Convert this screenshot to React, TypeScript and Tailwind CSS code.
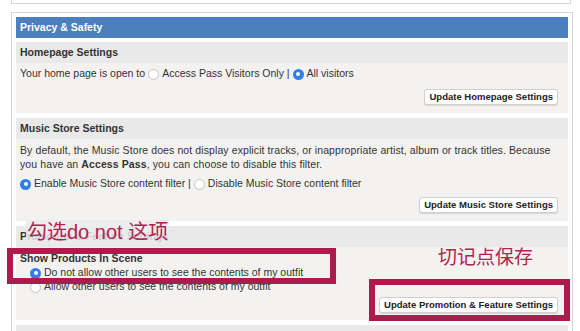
import type { ReactNode } from "react";

function Radio({ checked }: { checked?: boolean }) {
  return checked ? (
    <span className="inline-flex h-[11px] w-[11px] shrink-0 items-center justify-center rounded-full bg-[#2f7fe6]">
      <span className="h-[4px] w-[4px] rounded-full bg-white" />
    </span>
  ) : (
    <span className="inline-block h-[11px] w-[11px] shrink-0 rounded-full border border-[#c4c4c4] bg-white" />
  );
}

function UpdateButton({ children }: { children: ReactNode }) {
  return (
    <div className="flex justify-end pr-[10px]">
      <button className="h-[16px] rounded-[3px] border border-[#cfcfcf] bg-white px-[4px] text-[9.5px] font-bold leading-none text-[#222] shadow-[0_1px_1px_rgba(0,0,0,0.12)]">
        {children}
      </button>
    </div>
  );
}

function Section({
  title,
  children,
  className = "",
}: {
  title: string;
  children?: ReactNode;
  className?: string;
}) {
  return (
    <div className="bg-[#f3f2f0]">
      <div className="flex h-[21px] items-center bg-[#e9e9e9] px-[4px] text-[10.5px] font-bold text-[#333]">
        {title}
      </div>
      <div className={className}>{children}</div>
    </div>
  );
}

export default function App() {
  return (
    <div
      className="relative h-[331px] w-[580px] overflow-hidden bg-white text-[10.5px] text-[#333]"
      style={{ fontFamily: '"Liberation Sans", Arial, "Noto Sans CJK SC", sans-serif' }}
    >
      {/* tail of previous panel */}
      <div className="ml-[11px] h-[4px] w-[560px] border-x border-b border-[#d6d6d6]" />

      <div className="ml-[11px] mt-[8px] w-[562px] border border-[#d6d6d6] p-[4px] pb-0">
        <div className="flex h-[21px] items-center bg-[#4b80bd] px-[4px] text-[10.5px] font-bold text-white">
          Privacy &amp; Safety
        </div>

        <div className="mt-[4px] flex flex-col gap-[5px]">
          <Section title="Homepage Settings" className="h-[50px] pt-[5px]">
            <div className="flex h-[12px] items-center gap-[3px] px-[4px]">
              <span>Your home page is open to</span>
              <Radio />
              <span>Access Pass Visitors Only |</span>
              <Radio checked />
              <span>All visitors</span>
            </div>
            <div className="mt-[9px]">
              <UpdateButton>Update Homepage Settings</UpdateButton>
            </div>
          </Section>

          <Section title="Music Store Settings" className="h-[82px] pt-[4px]">
            <p className="px-[4px] leading-[14px] tracking-[0.1px]">
              By default, the Music Store does not display explicit tracks, or inappropriate artist, album or track
              titles. Because
              <br />
              you have an <b>Access Pass</b>, you can choose to disable this filter.
            </p>
            <div className="mt-[7px] flex h-[12px] items-center gap-[3px] px-[4px]">
              <Radio checked />
              <span>Enable Music Store content filter |</span>
              <Radio />
              <span>Disable Music Store content filter</span>
            </div>
            <div className="mt-[7px]">
              <UpdateButton>Update Music Store Settings</UpdateButton>
            </div>
          </Section>

          <Section title="Promotion &amp; Feature Settings" className="h-[73px] pt-[5px]">
            <div className="px-[4px] font-bold leading-[12px]">Show Products In Scene</div>
            <div className="mt-[3px] flex h-[12px] items-center gap-[3px] pl-[14px]">
              <Radio checked />
              <span>Do not allow other users to see the contents of my outfit</span>
            </div>
            <div className="mt-[2px] flex h-[12px] items-center gap-[3px] pl-[14px]">
              <Radio />
              <span>Allow other users to see the contents of my outfit</span>
            </div>
            <div className="mt-[4px]">
              <UpdateButton>Update Promotion &amp; Feature Settings</UpdateButton>
            </div>
          </Section>

          <Section title="Friends &amp; User Settings" className="h-[40px]" />
        </div>
      </div>

      {/* annotations */}
      <div className="absolute left-[26px] top-[220px] bg-[#ebebeb]/85 px-[1px] text-[20px] leading-[24px] text-[#b0224f]">
        勾选do not 这项
      </div>
      <div className="absolute left-[7px] top-[248px] h-[36px] w-[329px] border-[6px] border-[#ad1b4c]" />
      <div className="absolute left-[438px] top-[246px] text-[19px] leading-[24px] text-[#b0224f]">切记点保存</div>
      <div className="absolute left-[369px] top-[279px] h-[42px] w-[201px] border-[6px] border-[#ad1b4c]" />
    </div>
  );
}
